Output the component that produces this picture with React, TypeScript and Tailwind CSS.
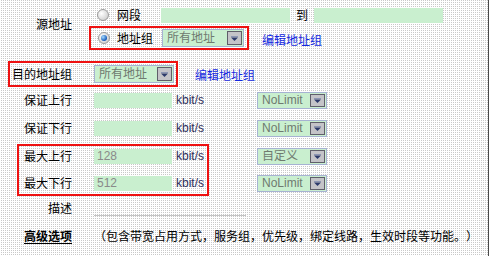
import React from 'react';

const dots = 'bg-white bg-[conic-gradient(#c9c9c9_25%,transparent_0)] bg-[length:2px_2px]';
const green = 'bg-[#c9efcf]';
const latin = "font-['Liberation_Sans',sans-serif]";

const Radio: React.FC<{ checked?: boolean }> = ({ checked }) => (
  <span className="w-[12px] h-[12px] rounded-full border border-[#9a9a9a] bg-[radial-gradient(circle_at_35%_35%,#ffffff,#cfcfcf_80%)] flex items-center justify-center shrink-0">
    {checked && (
      <span className="w-[6px] h-[6px] rounded-full bg-[radial-gradient(circle_at_35%_35%,#a8dcff,#1458b8_70%)]" />
    )}
  </span>
);

const DropButton: React.FC = () => (
  <span className="w-[15px] h-full shrink-0 border border-[#5f5f6a] bg-[#c4c4c8] flex items-center justify-center">
    <svg width="7" height="5" viewBox="0 0 7 5">
      <rect x="0" y="0" width="7" height="1" fill="#8c96b4" />
      <path d="M0 1.5 H7 L3.5 5 Z" fill="#2c3a6a" />
    </svg>
  </span>
);

const Select: React.FC<{ text: string; w: string; h: string }> = ({ text, w, h }) => (
  <div className={`flex items-stretch border border-[#a6b2d2] p-[1px] ${w} ${h} ${green}`}>
    <span className="flex-1 flex items-center pl-[3px] text-[#6f7a6f] whitespace-nowrap overflow-hidden font-['Liberation_Sans','Noto_Sans_CJK_SC',sans-serif]">{text}</span>
    <DropButton />
  </div>
);

const Field: React.FC<{ value?: string }> = ({ value }) => (
  <div className={`ml-[22px] w-[78px] h-[15px] flex items-center pl-[3px] text-[#8a8a8a] ${latin} ${green}`}>{value}</div>
);

const RateRow: React.FC<{ label: string; value?: string; mode: string; cls: string }> = ({ label, value, mode, cls }) => (
  <div className={`flex items-center ${cls}`}>
    <div className="w-[72px] shrink-0 text-right">{label}</div>
    <Field value={value} />
    <span className={`w-[85px] shrink-0 pl-[4px] text-[#2e2e5c] ${latin}`}>kbit/s</span>
    <Select text={mode} w="w-[70px]" h="h-[17px]" />
  </div>
);

export default function App() {
  return (
    <div className={`w-[489px] h-[256px] overflow-hidden border-r border-[#4a4a4a] text-[12px] leading-[14px] text-black font-['Noto_Sans_CJK_SC',sans-serif] [text-spacing-trim:space-all] ${dots}`}>
      {/* 源地址 */}
      <div className="flex pt-[7px]">
        <div className="w-[72px] shrink-0 text-right pt-[10px]">源地址</div>
        <div className="flex flex-col ml-[17px]">
          <div className="flex items-center h-[16px] pl-[8px]">
            <Radio />
            <span className="ml-[8px]">网段</span>
            <div className={`ml-[20px] w-[129px] h-[15px] ${green}`} />
            <span className="ml-[6px]">到</span>
            <div className={`ml-[6px] w-[129px] h-[15px] ${green}`} />
          </div>
          <div className="flex items-center mt-[3px]">
            <div className="flex items-center w-[160px] h-[24px] border-2 border-[#ee1111] pl-[7px]">
              <Radio checked />
              <span className="ml-[7px]">地址组</span>
              <div className="ml-[9px]">
                <Select text="所有地址" w="w-[82px]" h="h-[18px]" />
              </div>
            </div>
            <span className="ml-[13px] pt-[3px] text-[#1428e0]">编辑地址组</span>
          </div>
        </div>
      </div>

      {/* 目的地址组 */}
      <div className="flex items-center mt-[11px] ml-[8px]">
        <div className="flex items-center w-[170px] h-[26px] border-2 border-[#ee1111] pl-[2px]">
          <span className="w-[60px] shrink-0">目的地址组</span>
          <div className="ml-[22px]">
            <Select text="所有地址" w="w-[80px]" h="h-[18px]" />
          </div>
        </div>
        <span className="ml-[17px] pt-[2px] text-[#1428e0]">编辑地址组</span>
      </div>

      <RateRow label="保证上行" mode="NoLimit" cls="h-[26px]" />
      <RateRow label="保证下行" mode="NoLimit" cls="h-[30px]" />

      <div className="relative mt-[1px] py-[2px]">
        <RateRow label="最大上行" value="128" mode="自定义" cls="h-[20px]" />
        <RateRow label="最大下行" value="512" mode="NoLimit" cls="h-[22px] mt-[6px]" />
        <div className="absolute left-[17px] top-0 w-[192px] h-full border-2 border-[#ee1111] pointer-events-none" />
      </div>

      {/* 描述 */}
      <div className="flex h-[24px]">
        <div className="w-[72px] shrink-0 text-right self-center">描述</div>
        <div className="ml-[22px] mt-[19px] w-[152px] h-px bg-[#c4c4c4]" />
      </div>

      <div className="flex items-center h-[28px] mt-[2px]">
        <div className="w-[72px] shrink-0 text-right font-bold underline underline-offset-2">高级选项</div>
        <span className="ml-[22px] whitespace-nowrap">（包含带宽占用方式，服务组，优先级，绑定线路，生效时段等功能。）</span>
      </div>
    </div>
  );
}
